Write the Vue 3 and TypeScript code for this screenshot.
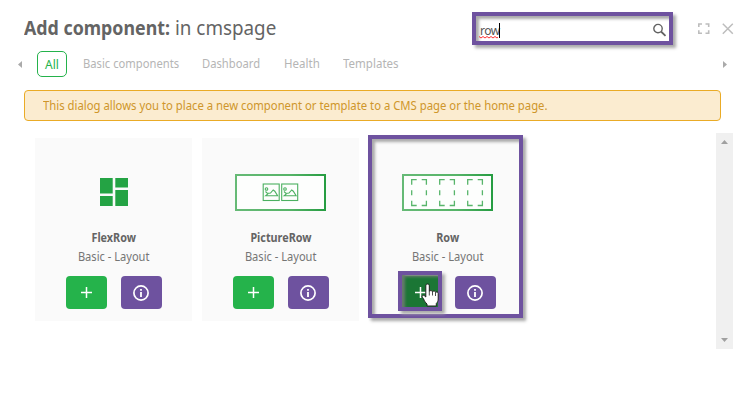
<script setup lang="ts">
import { ref } from 'vue'

interface Item { name: string; kind: 'flex' | 'picture' | 'row'; selected?: boolean }

const query = ref('row')
const tabs = [
  { label: 'All', cls: 'all' },
  { label: 'Basic components', cls: 'basic' },
  { label: 'Dashboard', cls: 'dashboard' },
  { label: 'Health', cls: 'health' },
  { label: 'Templates', cls: 'templates' },
]
const items: Item[] = [
  { name: 'FlexRow', kind: 'flex' },
  { name: 'PictureRow', kind: 'picture' },
  { name: 'Row', kind: 'row', selected: true },
]
</script>

<template>
  <main class="dialog">
    <header class="header">
      <h1 class="title"><b>Add component:</b> <span>in cmspage</span></h1>
      <div class="search">
        <span class="query">{{ query }}</span><i class="caret"></i>
        <svg class="misspelt" width="21" height="3" viewBox="0 0 21 3"><path d="M0 .5l2 1.500 2-1.500 2 1.500 2-1.500 2 1.500 2-1.500 2 1.500 2-1.500 2 1.500 1-.8" fill="none" stroke="#f33" stroke-width="1" /></svg>
        <svg class="lens" width="15" height="15" viewBox="0 0 15 15" fill="none" stroke="#626262"><circle cx="6" cy="5.600" r="4.200" stroke-width="1.400" /><path d="M9 8.500l4.500 4.300" stroke-width="1.800" /></svg>
      </div>
      <svg class="expand" width="12" height="12" viewBox="0 0 12 12"><path d="M.8 4V1H4M7.500 1h3.200v3M10.700 7.300v3H7.500M4 10.300H.8v-3" fill="none" stroke="#bdbdbd" stroke-width="1.600" /></svg>
      <svg class="close" width="12" height="12" viewBox="0 0 12 12"><path d="M.8.8l10 10M10.800.8l-10 10" stroke="#bdbdbd" stroke-width="1.500" /></svg>
    </header>
    <nav class="tabs">
      <svg class="prev" width="4" height="7" viewBox="0 0 4 7"><path d="M4 0v7L0 3.500z" fill="#aaa" /></svg>
      <span v-for="t in tabs" :key="t.label" class="tab" :class="t.cls">{{ t.label }}</span>
      <svg class="next" width="4" height="7" viewBox="0 0 4 7"><path d="M0 0v7l4-3.500z" fill="#aaa" /></svg>
    </nav>
    <p class="notice"><span>This dialog allows you to place a new component or template to a CMS page or the home page.</span></p>
    <section class="body">
      <div class="cards">
        <article v-for="c in items" :key="c.name" class="card">
          <div class="preview">
            <svg v-if="c.kind === 'flex'" width="28" height="28" viewBox="0 0 28 28"><path d="M0 0h12.700v15.500H0zM15.300 0H28v9.500H15.300zM0 18h12.700v10H0zM15.300 12H28v16H15.300z" fill="#24a344" /></svg>
            <svg v-else width="91" height="37" viewBox="0 0 91 37">
              <defs><linearGradient :id="c.kind + 'g'" gradientUnits="userSpaceOnUse" x1="0" y1="0" x2="91" y2="0"><stop offset="0" stop-color="#66ba76" /><stop offset=".6" stop-color="#56b468" /><stop offset="1" stop-color="#259c41" /></linearGradient></defs>
              <rect x="1" y="1" width="89" height="35" fill="#fdfefd" :stroke="`url(#${c.kind}g)`" stroke-width="2" />
              <g v-if="c.kind === 'picture'" fill="none" stroke="#4bb060" stroke-width="1.100">
                <g v-for="x in [28, 46.500]" :key="x" :transform="`translate(${x} 9.500)`">
                  <rect x=".2" y=".5" width="16" height="16.500" /><circle cx="3.500" cy="5.500" r="1.300" /><path d="M2.500 8l2 2 3-.5L10.200 6.500l1.600 1.200 2.800 4.600H2.700l3-2.600" />
                </g>
              </g>
              <g v-else fill="none" stroke="#58b56b" stroke-width="1.300">
                <path v-for="x in [9.700, 37.700, 65.700]" :key="x" :transform="`translate(${x} 5.700)`" d="M0 5V0h5M10 0h4.700v5M14.700 10.500v5M14.700 21v4.800H10M5 25.800H0V21M0 15.500v-5" />
              </g>
            </svg>
          </div>
          <h2 class="name" :class="c.kind">{{ c.name }}</h2>
          <p class="category">Basic - Layout</p>
          <div class="actions">
            <button class="btn add" :class="{ active: c.selected }" aria-label="Add"><svg width="11" height="11" viewBox="0 0 11 11"><path d="M0 5.500h11M5.500 0v11" stroke="#fff" stroke-width="1.500" /></svg></button>
            <button class="btn info" aria-label="Information"><svg width="16" height="16" viewBox="0 0 16 16"><circle cx="8" cy="8" r="7.100" fill="none" stroke="#fff" stroke-width="1.700" /><path d="M8 4v1.800M8 7v5" stroke="#fff" stroke-width="1.800" /></svg></button>
          </div>
          <template v-if="c.selected">
            <i class="mark card-mark"></i><i class="mark button-mark"></i>
            <svg class="cursor" width="18" height="24" viewBox="0 0 18 24"><path d="M6.500 1C5.400 1 4.800 1.700 4.800 3v11l-1.300-1.200c-1.100-1-2.500-.4-2.400.5 0 1 1 1.700 1.500 2.700.8 1.900 1.700 3.500 3.400 5V23h9.300v-2.500c1.300-1.300 1.900-2.700 1.900-4.500v-5.500c0-1.600-1.800-2-2.500-1-.3-1.500-2.100-1.800-3-.8-.6-1.200-2.400-1.400-3.400-.6V3C8.300 1.700 7.700 1 6.500 1z" fill="#fff" stroke="#202020" stroke-width="1" /><path d="M8.300 8v4.500M11.500 8.700v3.800M14.500 9.500v3.500" stroke="#202020" stroke-width=".8" /></svg>
          </template>
        </article>
      </div>
      <div class="scrollbar">
        <svg width="7" height="4" viewBox="0 0 7 4"><path d="M0 4h7L3.500 0z" fill="#a0a0a0" /></svg>
        <svg width="7" height="4" viewBox="0 0 7 4"><path d="M0 0h7L3.500 4z" fill="#a0a0a0" /></svg>
      </div>
    </section>
  </main>
</template>

<style>
body { margin: 0; background: #fff; overflow: hidden; }
</style>

<style scoped>
* { box-sizing: border-box; }
svg { display: block; flex: none; }
.dialog { width: 748px; height: 419px; overflow: hidden; background: #fff; font-family: "Noto Sans", sans-serif; color: #646464; }
.header { display: flex; height: 47px; padding: 12px 14px 0 24px; align-items: flex-start; }
.title { margin: 1px 0 0; width: 448px; font-size: 20px; line-height: 30px; font-weight: 400; white-space: nowrap; display: flex; }
.title b { font-weight: 700; width: 151px; transform: scaleX(.89); transform-origin: left; }
.title span { transform: scaleX(.94); transform-origin: left; }
.search { position: relative; width: 201px; height: 33px; border: 4px solid #6e529f; box-shadow: 3px 3px 3px #aaa, inset 3px 3px 3px #aaa; display: flex; align-items: flex-start; padding: 7px 2px 0 4px; }
.query { width: 19px; font: 12px/16px "Noto Sans", sans-serif; letter-spacing: -.5px; color: #555; }
.caret { width: 1px; height: 15px; background: #000; }
.misspelt { position: absolute; left: 3px; top: 20px; }
.lens { margin-left: auto; }
.expand { margin: 11px 0 0 25px; }
.close { margin: 11px 0 0 12px; }
.tabs { display: flex; align-items: center; height: 34px; padding: 0 21px 0 18px; font-size: 12px; color: #b5b5b5; white-space: nowrap; }
.tab { line-height: 24px; transform-origin: left; }
.all { width: 30px; height: 26px; margin: 0 16px 0 15px; border: 1px solid #24b24b; border-radius: 5px; color: #24b24b; text-align: center; line-height: 25px; }
.basic { width: 119px; transform: scaleX(.935); }
.dashboard { width: 82px; transform: scaleX(.935); }
.health { width: 59px; transform: scaleX(.96); }
.templates { transform: scaleX(.96); }
.next { margin-left: auto; }
.notice { margin: 9px 27px 0 24px; height: 31px; border: 1px solid #eaab26; border-radius: 4px; background: #fbecd0; padding-left: 18px; font-size: 12px; line-height: 29px; color: #cf962a; white-space: nowrap; }
.notice span { display: inline-block; transform: scaleX(.942); transform-origin: left; }
.body { display: flex; justify-content: space-between; margin: 12px 15px 0 35px; height: 216px; }
.cards { display: grid; grid-template-columns: repeat(3, 157px); gap: 10px; padding-top: 5px; align-items: start; }
.card { position: relative; height: 183px; background: #fafafa; display: flex; flex-direction: column; align-items: center; padding-top: 24px; }
.preview { height: 60px; display: grid; place-items: center; }
.name { margin: 7px 0 0; font-size: 12px; line-height: 18px; font-weight: 700; transform: scaleX(.9); }
.category { margin: 1px 0 0; font-size: 12px; line-height: 18px; color: #757575; transform: scaleX(.925); }
.actions { display: flex; gap: 14px; margin-top: 10px; }
.btn { width: 41px; height: 33px; border: 0; border-radius: 4px; padding: 0; display: grid; place-items: center; }
.add { background: #25b34b; }
.add.active { background: #1b7635; }
.info { background: #6e529f; }
.mark { position: absolute; border: 4px solid #6e529f; box-shadow: 3px 3px 3px #aaa, inset 3px 3px 3px #aaa; }
.card-mark { left: -1px; top: -3px; width: 155px; height: 183px; }
.button-mark { left: 29px; top: 133px; width: 44px; height: 40px; box-shadow: 3px 3px 3px #aaa, inset 3px 2px 3px #667a6c; }
.cursor { position: absolute; left: 52px; top: 145px; }
.scrollbar { width: 17px; height: 216px; background: #f0f0f0; display: flex; flex-direction: column; justify-content: space-between; align-items: center; padding: 7px 0; }
</style>
